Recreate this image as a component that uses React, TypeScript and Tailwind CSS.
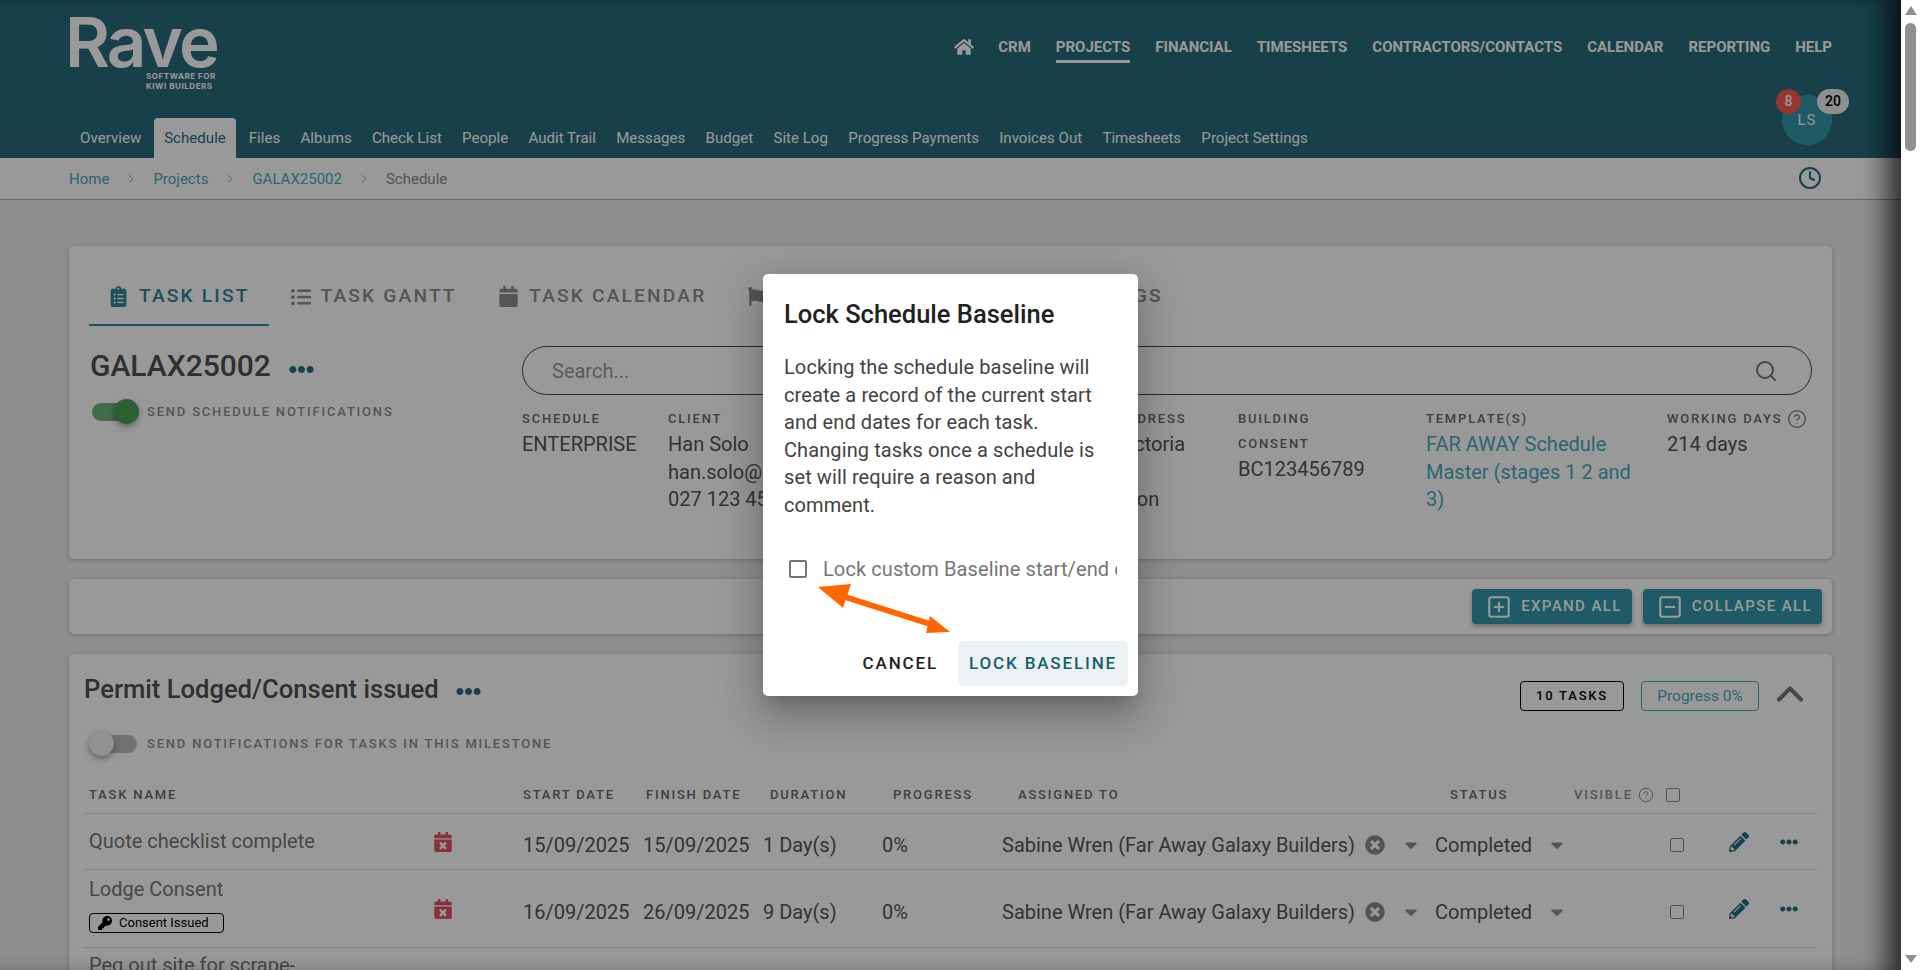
import React from 'react';
import { Clock, Search, ChevronUp, ChevronRight, SquarePlus, SquareMinus, CircleHelp } from 'lucide-react';
import {
  FaHome,
  FaClipboardList,
  FaListUl,
  FaCalendar,
  FaFlag,
  FaEllipsisH,
  FaCalendarTimes,
  FaKey,
  FaPencilAlt,
  FaTimesCircle,
  FaCaretDown,
} from 'react-icons/fa';

const mainNav = ['CRM', 'PROJECTS', 'FINANCIAL', 'TIMESHEETS', 'CONTRACTORS/CONTACTS', 'CALENDAR', 'REPORTING', 'HELP'];
const subNav = ['Overview', 'Schedule', 'Files', 'Albums', 'Check List', 'People', 'Audit Trail', 'Messages', 'Budget', 'Site Log', 'Progress Payments', 'Invoices Out', 'Timesheets', 'Project Settings'];

const tasks = [
  { name: 'Quote checklist complete', start: '15/09/2025', finish: '15/09/2025', duration: '1 Day(s)', height: 'h-[56px]', badge: false },
  { name: 'Lodge Consent', start: '16/09/2025', finish: '26/09/2025', duration: '9 Day(s)', height: 'h-[78px]', badge: true },
];

const Label: React.FC<{ children: React.ReactNode; className?: string }> = ({ children, className = '' }) => (
  <div className={`mt-[1px] text-[13px] leading-[25px] font-medium tracking-[1.8px] uppercase text-[#6a6a6a] ${className}`}>{children}</div>
);

const Toggle: React.FC<{ on: boolean }> = ({ on }) => (
  <div className="relative w-[48px] h-[25px] flex items-center">
    <div className={`w-[46px] h-[18px] ml-[2px] rounded-full ${on ? 'bg-[#6fb37a]' : 'bg-[#bdbdbd]'}`} />
    <div className={`absolute top-0 w-[25px] h-[25px] rounded-full shadow-[0_3px_6px_rgba(0,0,0,0.35)] ${on ? 'left-[24px] bg-[#4a9e55]' : 'left-0 bg-[#f2f2f2]'}`} />
  </div>
);

const Header: React.FC = () => (
  <header className="bg-[#296b7e] h-[158px] shrink-0 flex flex-col">
    <div className="h-[118px] flex justify-between pl-[65px] pr-[69px]">
      <div className="w-[153px] pt-[7px] flex flex-col items-end text-white font-[Inter,sans-serif]">
        <div className="text-[69px] leading-[70px] font-semibold tracking-[-2.8px] w-full">Rave</div>
        <div className="text-[8px] leading-[9.5px] font-bold tracking-[0.55px] whitespace-nowrap mt-[-5px] w-[72px]">SOFTWARE FOR<br />KIWI BUILDERS</div>
      </div>
      <nav className="flex items-start gap-[25px] pt-[36px]">
        <FaHome className="text-white mt-[1px] mr-[-1px]" size={20} />
        {mainNav.map((item) => (
          <a key={item} className={`text-[15px] leading-[22px] font-bold text-white pb-[2px] ${item === 'PROJECTS' ? 'border-b-[3px] border-white' : ''}`}>{item}</a>
        ))}
      </nav>
    </div>
    <div className="relative h-[40px] flex items-end pl-[70px]">
      {subNav.map((item) => (
        <a key={item} className={`h-[40px] leading-[40px] px-[10.1px] text-[15.1px] ${item === 'Schedule' ? 'mx-[2.7px] bg-white rounded-t-[4px] text-[#2b6d7f]' : 'text-white'}`}>{item}</a>
      ))}
      <div className="absolute left-[1782px] top-[-23px] w-[50px] h-[50px] rounded-full bg-[#3298ac] flex items-center justify-center text-white text-[15px] tracking-[1px]">LS</div>
      <div className="absolute left-[1776px] top-[-29px] w-[25px] h-[25px] rounded-full bg-[#f95a53] text-white text-[14px] font-medium flex items-center justify-center">8</div>
      <div className="absolute left-[1817px] top-[-29px] w-[32px] h-[25px] rounded-full bg-[#eeeeee] text-black text-[14px] font-medium flex items-center justify-center">20</div>
    </div>
  </header>
);

const Crumb: React.FC = () => (
  <span className="w-[44px] flex justify-center text-[#8c8c8c]"><ChevronRight size={14} strokeWidth={1.5} /></span>
);

const Breadcrumb: React.FC = () => (
  <div className="h-[42px] shrink-0 bg-white border-b border-[#aaaaaa] flex items-center justify-between pl-[69px] pr-[79px] text-[15px]">
    <div className="flex items-center pt-[1px] text-[#4aabbd]">
      <a>Home</a>
      <Crumb />
      <a>Projects</a>
      <Crumb />
      <a>GALAX25002</a>
      <Crumb />
      <span className="text-[#8c8c8c]">Schedule</span>
    </div>
    <Clock className="text-[#296b7e] mb-[2px]" size={24} strokeWidth={2} />
  </div>
);

const Tab: React.FC<{ icon: React.ReactNode; label: string; active?: boolean; className?: string }> = ({ icon, label, active, className = '' }) => (
  <div className={`h-[60px] pt-[3px] pl-[22px] flex items-center gap-[10px] text-[19.2px] font-medium tracking-[2.15px] border-b-2 ${active ? 'border-[#2f8599] text-[#2f8599]' : 'border-transparent text-[#8e8e8e]'} ${className}`}>
    {icon}
    <span>{label}</span>
  </div>
);

const ScheduleCard: React.FC = () => (
  <section className="h-[313px] bg-white rounded-[5px] shadow-[0_1px_4px_rgba(0,0,0,0.25)] pt-[20px] px-[20px]">
    <div className="flex">
      <Tab className="pr-[19px]" active icon={<FaClipboardList className="ml-[-3px]" size={21} />} label="TASK LIST" />
      <Tab className="pr-[20.5px]" icon={<FaListUl size={20} />} label="TASK GANTT" />
      <Tab className="pr-[22px]" icon={<FaCalendar className="ml-[-1px]" size={21} />} label="TASK CALENDAR" />
      <Tab className="pr-[22px]" icon={<FaFlag className="ml-[-2px] mr-[6px]" size={19} />} label="BASELINES/MILESTONES SETTINGS" />
    </div>
    <div className="flex mt-[20px] text-[20px] text-[#555]">
      <div className="w-[433px] pl-[1px]">
        <div className="flex items-center h-[40px] gap-[18px]">
          <h2 className="text-[30px] leading-[40px] font-medium text-[#505050]">GALAX25002</h2>
          <FaEllipsisH className="text-[#296b7e] mt-[6px]" size={25} />
        </div>
        <div className="flex items-center mt-[13px] gap-[9px]">
          <Toggle on />
          <span className="text-[13px] font-medium tracking-[1.8px] text-[#8e8e8e]">SEND SCHEDULE NOTIFICATIONS</span>
        </div>
      </div>
      <div className="flex-1 min-w-0">
        <div className="h-[49px] rounded-full border border-[#444] flex items-center justify-between pl-[29px] pr-[33px] text-[#999]">
          <span>Search...</span>
          <Search className="text-[#777]" size={24} />
        </div>
        <div className="flex mt-[10px] leading-[27.5px]">
          <div className="w-[146px]"><Label>Schedule</Label><div>ENTERPRISE</div></div>
          <div className="w-[410px]"><Label>Client</Label><div>Han Solo<br />han.solo@farawaygalaxy.co.nz<br />027 123 4567</div></div>
          <div className="w-[160px]"><Label>Site Address</Label><div>123 Victoria<br />Street<br />Hamilton</div></div>
          <div className="w-[188px]"><Label>Building<br />Consent</Label><div>BC123456789</div></div>
          <div className="w-[241px]"><Label>Template(s)</Label><div className="w-[215px] text-[#4aabbd]">FAR AWAY Schedule Master (stages 1 2 and 3)</div></div>
          <div><Label className="flex items-center gap-[5px]">Working Days <CircleHelp size={20} strokeWidth={1.5} className="text-[#777]" /></Label><div>214 days</div></div>
        </div>
      </div>
    </div>
  </section>
);

const ActionButton: React.FC<{ icon: React.ReactNode; label: string }> = ({ icon, label }) => (
  <button className="h-[35px] pl-[14px] pr-[10px] rounded-[4px] bg-[#3298ac] text-white flex items-center gap-[9px] text-[15px] font-medium tracking-[1.4px] shadow-[0_2px_4px_rgba(0,0,0,0.3)]">
    {icon}
    {label}
  </button>
);

const TaskRow: React.FC<{ task: (typeof tasks)[number] }> = ({ task }) => (
  <div className={`grid grid-cols-[349px_90px_120px_120px_119px_120px_433px_235px_59px_51px_37px] items-center border-b border-[#e0e0e0] text-[20px] text-[#555] ${task.height}`}>
    <div className={`pl-[5px] ${task.badge ? 'pb-[8px]' : ''}`}>
      <div className="text-[#777] leading-[27px]">{task.name}</div>
      {task.badge && (
        <div className="mt-[10px] w-[135px] h-[20px] rounded-[4px] border border-black flex items-center gap-[7px] pl-[8px] text-[13px] text-black">
          <FaKey size={14} />
          Consent Issued
        </div>
      )}
    </div>
    <FaCalendarTimes className="text-[#e25265]" size={20} />
    <div className="pt-[7px]">{task.start}</div>
    <div className="pt-[7px]">{task.finish}</div>
    <div className="pt-[7px]">{task.duration}</div>
    <div className="pt-[7px]">0%</div>
    <div className="pt-[7px] flex items-center">
      <span className="w-[363px] whitespace-nowrap">Sabine Wren (Far Away Galaxy Builders)</span>
      <FaTimesCircle className="text-[#8c8c8c]" size={20} />
      <FaCaretDown className="text-[#8c8c8c] ml-[16px]" size={20} />
    </div>
    <div className="pt-[7px] flex items-center">
      <span className="w-[112px]">Completed</span>
      <FaCaretDown className="text-[#8c8c8c]" size={20} />
    </div>
    <div className="pt-[7px]"><div className="w-[14px] h-[14px] rounded-[2px] border border-[#888]" /></div>
    <FaPencilAlt className="text-[#296b7e]" size={20} />
    <FaEllipsisH className="text-[#296b7e]" size={18} />
  </div>
);

const MilestoneCard: React.FC = () => (
  <section className="bg-white rounded-[5px] shadow-[0_1px_4px_rgba(0,0,0,0.25)] pt-[15px] px-[15px] h-[400px]">
    <div className="flex items-start">
      <h3 className="text-[25.6px] leading-[40px] font-medium text-[#505050]">Permit Lodged/Consent issued</h3>
      <FaEllipsisH className="text-[#296b7e] mt-[10px] ml-[17px]" size={25} />
      <div className="ml-auto mt-[12px] w-[104px] h-[30px] rounded-[4px] border border-black flex items-center justify-center text-[13px] font-medium tracking-[1.8px] text-black">10 TASKS</div>
      <div className="ml-[17px] mt-[12px] w-[118px] h-[30px] rounded-[4px] border border-[#4aabbd] flex items-center justify-center pt-[1px] text-[15.5px] text-[#4aabbd]">Progress 0%</div>
      <ChevronUp className="text-[#777] ml-[9px] mr-[5px] mt-[3px]" size={44} strokeWidth={2.2} />
    </div>
    <div className="flex items-center mt-[15px] ml-[5px] gap-[10px]">
      <Toggle on={false} />
      <span className="text-[13px] font-medium tracking-[1.8px] text-[#8e8e8e]">SEND NOTIFICATIONS FOR TASKS IN THIS MILESTONE</span>
    </div>
    <div className="grid grid-cols-[349px_90px_120px_120px_119px_120px_433px_382px] items-center h-[38px] mt-[20px] border-b border-[#e0e0e0] text-[13px] font-medium tracking-[1.8px] text-[#6a6a6a]">
      <div className="pl-[5px]">TASK NAME</div>
      <div />
      <div>START DATE</div>
      <div className="pl-[3px]">FINISH DATE</div>
      <div className="pl-[7px]">DURATION</div>
      <div className="pl-[11px]">PROGRESS</div>
      <div className="pl-[16px]">ASSIGNED TO</div>
      <div className="pl-[15px] flex items-center">
        <span className="w-[124px]">STATUS</span>
        <span className="flex items-center gap-[5px] text-[#8e8e8e]">
          VISIBLE
          <CircleHelp size={16} strokeWidth={1.5} />
          <span className="ml-[7px] w-[14px] h-[14px] rounded-[2px] border border-[#888]" />
        </span>
      </div>
    </div>
    {tasks.map((task) => <TaskRow key={task.name} task={task} />)}
    <div className="pl-[5px] pt-[4px] text-[20px] leading-[27px] text-[#777]">Peg out site for scrape-</div>
  </section>
);

const LockDialog: React.FC = () => (
  <div className="relative w-[375px] h-[422px] rounded-[5px] bg-white shadow-[0_11px_15px_-7px_rgba(0,0,0,0.2),0_24px_38px_3px_rgba(0,0,0,0.14),0_9px_46px_8px_rgba(0,0,0,0.12)] pt-[22px] px-[21px]">
    <h2 className="text-[25.5px] leading-[36px] font-medium text-[#212121]">Lock Schedule Baseline</h2>
    <p className="mt-[22px] w-[325px] text-[20px] leading-[27.5px] tracking-[0.1px] text-[#424242]">
      Locking the schedule baseline will create a record of the current start and end dates for each task. Changing tasks once a schedule is set will require a reason and comment.
    </p>
    <div className="mt-[35px] ml-[5px] flex items-center gap-[16px]">
      <div className="w-[18px] h-[18px] rounded-[2px] border-2 border-[#757575] shrink-0" />
      <span className="w-[295px] overflow-hidden whitespace-nowrap text-[20px] tracking-[0.1px] text-[#757575]">Lock custom Baseline start/end dates</span>
    </div>
    <div className="absolute right-[10px] bottom-[10px] flex items-center gap-[20px]">
      <button className="text-[17px] font-medium tracking-[1.85px] text-[#212121]">CANCEL</button>
      <button className="h-[45px] w-[170px] rounded-[5px] bg-[#ecf1f3] text-[17px] font-medium tracking-[1.85px] text-[#155f72]">LOCK BASELINE</button>
    </div>
    {/* orange annotation arrow */}
    <svg className="absolute left-[51px] top-[305px]" width="140" height="60" viewBox="0 0 140 60">
      <polygon points="4,8 37,5 29,29" fill="#ff6600" />
      <polygon points="136,53 116,37 112,54" fill="#ff6600" />
      <line x1="28" y1="17" x2="116" y2="45" stroke="#ff6600" strokeWidth="6" />
    </svg>
  </div>
);

const FakeScrollbar: React.FC = () => (
  <div className="w-[19px] h-full bg-white flex flex-col items-center shrink-0">
    <div className="mt-[6px] w-0 h-0 border-x-[6.5px] border-x-transparent border-b-[9px] border-b-[#8f8f8f]" />
    <div className="mt-[8px] w-[11px] h-[128px] rounded-full bg-[#8f8f8f]" />
    <div className="mt-auto mb-[7px] w-0 h-0 border-x-[6.5px] border-x-transparent border-t-[8px] border-t-[#8f8f8f]" />
  </div>
);

const App: React.FC = () => (
  <div className="w-full h-screen flex overflow-hidden font-[Roboto,sans-serif]">
    <div className="relative w-[1901px] h-full overflow-hidden bg-[#eeeeee] flex flex-col shrink-0">
      <Header />
      <Breadcrumb />
      <main className="pt-[46px] px-[69px] flex flex-col gap-[20px]">
        <ScheduleCard />
        <section className="h-[55px] bg-white rounded-[5px] shadow-[0_1px_4px_rgba(0,0,0,0.25)] flex items-center justify-end gap-[11px] pr-[10px]">
          <ActionButton icon={<SquarePlus size={26} />} label="EXPAND ALL" />
          <ActionButton icon={<SquareMinus size={26} />} label="COLLAPSE ALL" />
        </section>
        <MilestoneCard />
      </main>
      {/* dialog backdrop */}
      <div className="absolute inset-0 bg-black/40 shadow-[inset_-26px_0_26px_-12px_rgba(0,0,0,0.7)] flex justify-center items-start pt-[274px]">
        <LockDialog />
      </div>
    </div>
    <FakeScrollbar />
  </div>
);

export default App;
